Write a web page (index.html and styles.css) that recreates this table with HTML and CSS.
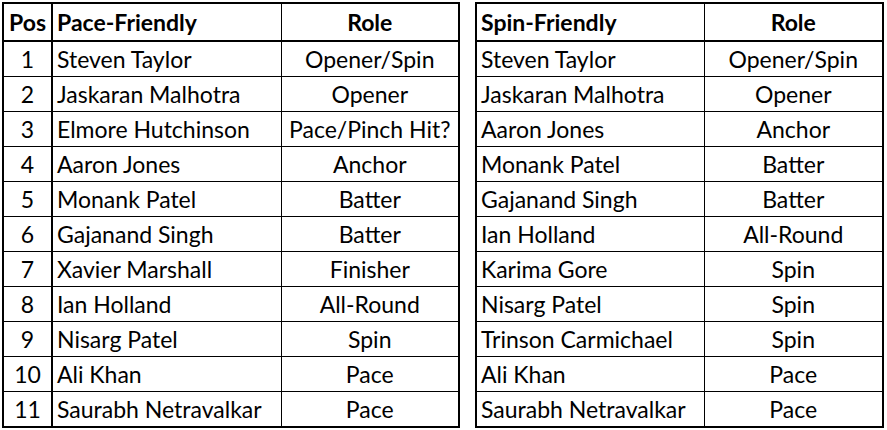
FILE: index.html
```
<!DOCTYPE html>
<html>
<head>
<meta charset="utf-8">
<link rel="stylesheet" href="styles.css">
</head>
<body>
<div class="wrap">
  <table class="grid left">
    <colgroup><col class="c-pos"><col class="c-name"><col class="c-role"></colgroup>
    <thead>
      <tr><th class="pos">Pos</th><th class="name">Pace-Friendly</th><th class="role">Role</th></tr>
    </thead>
    <tbody>
      <tr><td class="pos">1</td><td class="name">Steven Taylor</td><td class="role">Opener/Spin</td></tr>
      <tr><td class="pos">2</td><td class="name">Jaskaran Malhotra</td><td class="role">Opener</td></tr>
      <tr><td class="pos">3</td><td class="name">Elmore Hutchinson</td><td class="role">Pace/Pinch Hit?</td></tr>
      <tr><td class="pos">4</td><td class="name">Aaron Jones</td><td class="role">Anchor</td></tr>
      <tr><td class="pos">5</td><td class="name">Monank Patel</td><td class="role">Batter</td></tr>
      <tr><td class="pos">6</td><td class="name">Gajanand Singh</td><td class="role">Batter</td></tr>
      <tr><td class="pos">7</td><td class="name">Xavier Marshall</td><td class="role">Finisher</td></tr>
      <tr><td class="pos">8</td><td class="name">Ian Holland</td><td class="role">All-Round</td></tr>
      <tr><td class="pos">9</td><td class="name">Nisarg Patel</td><td class="role">Spin</td></tr>
      <tr><td class="pos">10</td><td class="name">Ali Khan</td><td class="role">Pace</td></tr>
      <tr><td class="pos">11</td><td class="name">Saurabh Netravalkar</td><td class="role">Pace</td></tr>
    </tbody>
  </table>
  <table class="grid right">
    <colgroup><col class="c-name2"><col class="c-role2"></colgroup>
    <thead>
      <tr><th class="name">Spin-Friendly</th><th class="role">Role</th></tr>
    </thead>
    <tbody>
      <tr><td class="name">Steven Taylor</td><td class="role">Opener/Spin</td></tr>
      <tr><td class="name">Jaskaran Malhotra</td><td class="role">Opener</td></tr>
      <tr><td class="name">Aaron Jones</td><td class="role">Anchor</td></tr>
      <tr><td class="name">Monank Patel</td><td class="role">Batter</td></tr>
      <tr><td class="name">Gajanand Singh</td><td class="role">Batter</td></tr>
      <tr><td class="name">Ian Holland</td><td class="role">All-Round</td></tr>
      <tr><td class="name">Karima Gore</td><td class="role">Spin</td></tr>
      <tr><td class="name">Nisarg Patel</td><td class="role">Spin</td></tr>
      <tr><td class="name">Trinson Carmichael</td><td class="role">Spin</td></tr>
      <tr><td class="name">Ali Khan</td><td class="role">Pace</td></tr>
      <tr><td class="name">Saurabh Netravalkar</td><td class="role">Pace</td></tr>
    </tbody>
  </table>
</div>
</body>
</html>
```
FILE: styles.css
```
html, body {
  margin: 0;
  padding: 0;
  background: #ffffff;
}
.wrap {
  display: flex;
  gap: 15px;
  padding: 2px 0 0 2px;
  font-family: "Lato", "Liberation Sans", sans-serif;
  font-size: 23px;
  color: #000;
}
.grid {
  border-collapse: collapse;
  table-layout: fixed;
  border: 2px solid #000;
}
.left { width: 456px; }
.right { width: 407px; }
.c-pos { width: 49px; }
.c-name { width: 229px; }
.c-role { width: 178px; }
.c-name2 { width: 228px; }
.c-role2 { width: 179px; }
.grid th, .grid td {
  border: 1px solid #000;
  padding: 0 4px;
  height: 34px;
  line-height: 26px;
  white-space: nowrap;
  overflow: hidden;
}
.grid th {
  font-weight: bold;
  height: 36px;
  border-bottom: 2px solid #000;
}
.grid .pos { text-align: center; border-right-width: 2px; }
.grid .name { text-align: left; }
.grid .role { text-align: center; }
```
